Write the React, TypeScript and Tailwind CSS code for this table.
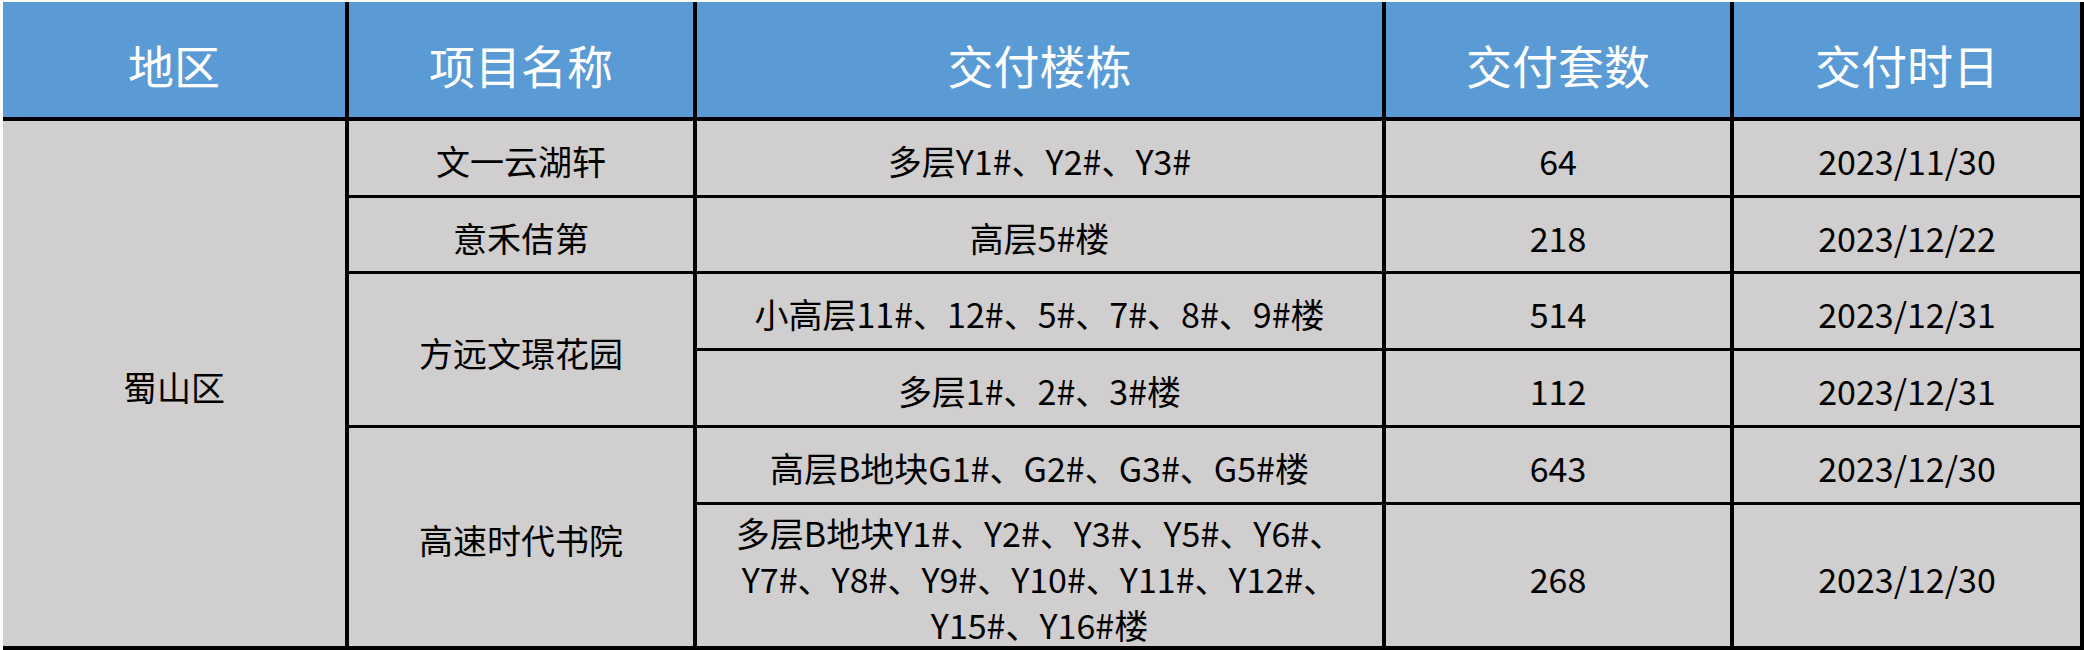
import React from "react";

const font = { fontFamily: '"Noto Sans CJK SC", "Noto Sans", sans-serif' };

function H({ children }: { children: React.ReactNode }) {
  return (
    <div className="flex items-center justify-center bg-[#5b9bd5] border-b border-black text-white text-[46px] leading-none pt-[8px]">
      {children}
    </div>
  );
}

function C({ children, className = "" }: { children: React.ReactNode; className?: string }) {
  return (
    <div className={"flex items-center justify-center bg-[#d0cece] text-black text-[34px] text-center pt-[6px] " + className}>
      {children}
    </div>
  );
}

export default function App() {
  return (
    <div className="w-[2084px] h-[650px] bg-white pt-[2px] pl-[3px]" style={font}>
      <div className="grid grid-cols-[342px_344px_685px_344px_346px] grid-rows-[116px_74px_73px_74px_74px_74px_141px] gap-x-[4px] gap-y-[3px] bg-black pr-[4px] pb-[4px] w-[2081px]">
        <H>地区</H>
        <H>项目名称</H>
        <H>交付楼栋</H>
        <H>交付套数</H>
        <H>交付时日</H>

        <C className="row-span-6 leading-none">蜀山区</C>
        <C className="leading-none">文一云湖轩</C>
        <C className="leading-none">多层Y1#、Y2#、Y3#</C>
        <C className="leading-none">64</C>
        <C className="leading-none">2023/11/30</C>

        <C className="leading-none">意禾佶第</C>
        <C className="leading-none">高层5#楼</C>
        <C className="leading-none">218</C>
        <C className="leading-none">2023/12/22</C>

        <C className="row-span-2 leading-none">方远文璟花园</C>
        <C className="leading-none">小高层11#、12#、5#、7#、8#、9#楼</C>
        <C className="leading-none">514</C>
        <C className="leading-none">2023/12/31</C>

        <C className="leading-none">多层1#、2#、3#楼</C>
        <C className="leading-none">112</C>
        <C className="leading-none">2023/12/31</C>

        <C className="row-span-2 leading-none">高速时代书院</C>
        <C className="leading-none">高层B地块G1#、G2#、G3#、G5#楼</C>
        <C className="leading-none">643</C>
        <C className="leading-none">2023/12/30</C>

        <C>
          <div className="leading-[46px]">
            <div>多层B地块Y1#、Y2#、Y3#、Y5#、Y6#、</div>
            <div>Y7#、Y8#、Y9#、Y10#、Y11#、Y12#、</div>
            <div>Y15#、Y16#楼</div>
          </div>
        </C>
        <C className="leading-none">268</C>
        <C className="leading-none">2023/12/30</C>
      </div>
    </div>
  );
}
